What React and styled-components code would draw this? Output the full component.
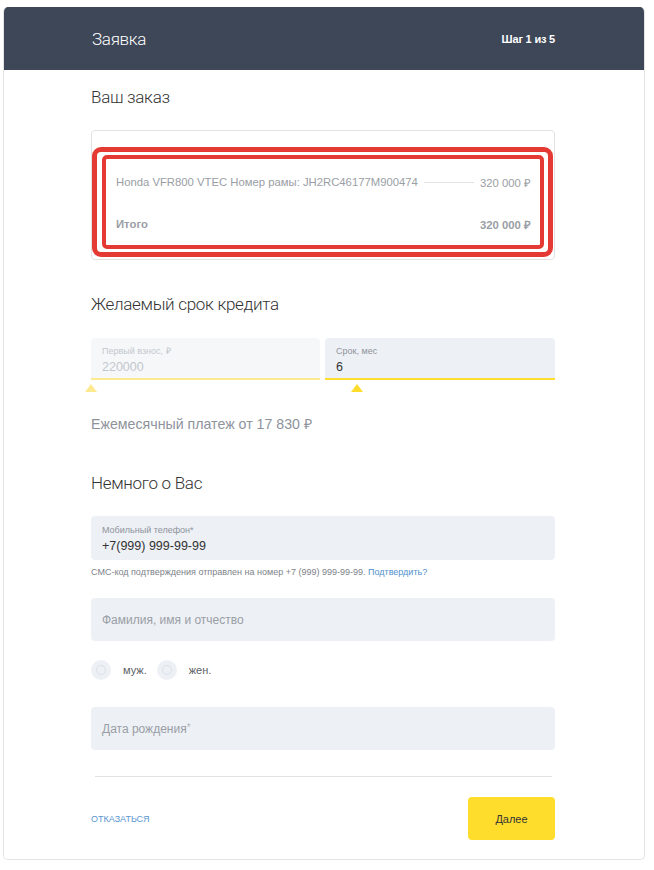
import React from "react";
import styled, { createGlobalStyle } from "styled-components";

const GlobalStyle = createGlobalStyle`
  html, body {
    margin: 0;
    padding: 0;
    background: #ffffff;
  }
  body {
    font-family: "Liberation Sans", Arial, sans-serif;
    color: #333333;
  }
`;

const Card = styled.div`
  box-sizing: border-box;
  width: 642px;
  margin: 7px 0 0 3px;
  border: 1px solid #e4e4e4;
  border-top: none;
  border-radius: 5px;
  overflow: hidden;
  padding-bottom: 19px;
`;

const Header = styled.header`
  height: 63px;
  background: #3e4757;
  display: flex;
  align-items: center;
  justify-content: space-between;
  padding: 0 89px 0 88px;
  color: #ffffff;
  h1 {
    margin: 0;
    font-family: Roboto, sans-serif;
    font-weight: 300;
    font-size: 17px;
    letter-spacing: -0.3px;
  }
  span {
    font-size: 11px;
    font-weight: 700;
    letter-spacing: -0.2px;
  }
`;

const Body = styled.div`
  padding: 0 89px 0 87px;
`;

const SectionTitle = styled.h2`
  margin: ${(p) => p.$top}px 0 0;
  font-family: Roboto, sans-serif;
  font-weight: 300;
  font-size: 17px;
  letter-spacing: -0.3px;
  line-height: 24px;
  color: #333333;
`;

const OrderBox = styled.div`
  box-sizing: border-box;
  margin-top: 21px;
  height: 130px;
  border: 1px solid #e2e2e2;
  border-radius: 4px;
  padding: 16px 1px 0 0;
`;

const Highlight = styled.div`
  box-sizing: border-box;
  height: 110px;
  border: 5px solid #e53a33;
  border-radius: 9px;
  padding: 3px 4px 3px 5px;
`;

const HighlightInner = styled.div`
  box-sizing: border-box;
  height: 100%;
  border: 4px solid #e53a33;
  border-radius: 5px;
  padding: 16px 9px 0 10px;
`;

const OrderRow = styled.div`
  display: flex;
  align-items: center;
  height: 14px;
  font-size: 11.3px;
  color: #9a9ea5;
  font-weight: ${(p) => (p.$bold ? 700 : 400)};
  margin-top: ${(p) => p.$top || 0}px;
`;

const Leader = styled.div`
  flex: 1;
  height: 1px;
  background: #e1e3e6;
  margin: 0 6px;
`;

const Spacer = styled.div`
  flex: 1;
`;

const InputRow = styled.div`
  margin-top: 22px;
  display: grid;
  grid-template-columns: 229px 230px;
  gap: 5px;
`;

const SliderField = styled.div`
  position: relative;
  box-sizing: border-box;
  height: 42px;
  background: ${(p) => (p.$disabled ? "#f6f7f9" : "#edf0f5")};
  border-bottom: 2px solid ${(p) => (p.$disabled ? "#fde98f" : "#ffdd2d")};
  border-radius: 4px 4px 0 0;
  padding: 8px 11px 0;
`;

const Thumb = styled.div`
  position: absolute;
  top: 46px;
  width: 0;
  height: 0;
  margin-left: -6px;
  border-left: 6px solid transparent;
  border-right: 6px solid transparent;
  border-bottom: 8px solid ${(p) => (p.$disabled ? "#fde98f" : "#ffdd2d")};
`;

const SmallLabel = styled.div`
  font-size: 9px;
  line-height: 11px;
  color: ${(p) => (p.$disabled ? "#c3c7cd" : "#8e939b")};
`;

const Value = styled.div`
  margin-top: 3px;
  font-size: 12.5px;
  line-height: 15px;
  color: ${(p) => (p.$disabled ? "#c3c7cd" : "#333333")};
`;

const Monthly = styled.div`
  margin-top: 35px;
  font-size: 14.2px;
  line-height: 18px;
  color: #8e939b;
`;

const Field = styled.div`
  box-sizing: border-box;
  margin-top: ${(p) => p.$top}px;
  height: ${(p) => p.$height}px;
  background: #edf0f5;
  border-radius: 4px;
  padding: ${(p) => (p.$filled ? "9px 11px 0" : "0 11px")};
  display: flex;
  flex-direction: column;
  justify-content: ${(p) => (p.$filled ? "flex-start" : "center")};
`;

const Placeholder = styled.div`
  font-size: 12px;
  color: #9a9ea5;
  sup {
    font-size: 10px;
    color: #b5b9bf;
    vertical-align: top;
    position: relative;
    top: 0;
  }
`;

const Hint = styled.div`
  margin-top: 6px;
  font-size: 9px;
  line-height: 12px;
  color: #7d8289;
  a {
    color: #4f8fcc;
    text-decoration: none;
  }
`;

const RadioGroup = styled.div`
  margin-top: 19px;
  display: flex;
  align-items: center;
  height: 20px;
`;

const RadioOption = styled.label`
  display: flex;
  align-items: center;
  gap: 12px;
  margin-right: 10px;
  font-size: 11px;
  color: #5c6168;
`;

const RadioCircle = styled.span`
  width: 20px;
  height: 20px;
  border-radius: 50%;
  background: #edf0f5;
  display: flex;
  align-items: center;
  justify-content: center;
  &::after {
    content: "";
    width: 8px;
    height: 8px;
    border-radius: 50%;
    border: 1px solid #dde1e8;
  }
`;

const Divider = styled.hr`
  margin: 26px 3px 0 4px;
  border: none;
  border-top: 1px solid #e2e2e2;
`;

const Footer = styled.div`
  margin-top: 20px;
  display: flex;
  align-items: center;
  justify-content: space-between;
`;

const CancelLink = styled.a`
  font-size: 9px;
  text-transform: uppercase;
  color: #5a96cf;
  text-decoration: none;
`;

const NextButton = styled.button`
  width: 87px;
  height: 43px;
  border: none;
  border-radius: 4px;
  background: #ffdd2d;
  font-family: "Liberation Sans", Arial, sans-serif;
  font-size: 11px;
  color: #333333;
`;

export default function App() {
  return (
    <>
      <GlobalStyle />
      <Card>
        <Header>
          <h1>Заявка</h1>
          <span>Шаг 1 из 5</span>
        </Header>
        <Body>
          <SectionTitle $top={15}>Ваш заказ</SectionTitle>
          <OrderBox>
            <Highlight>
              <HighlightInner>
                <OrderRow>
                  <span>Honda VFR800 VTEC Номер рамы: JH2RC46177M900474</span>
                  <Leader />
                  <span>320 000 ₽</span>
                </OrderRow>
                <OrderRow $bold $top={28}>
                  <span>Итого</span>
                  <Spacer />
                  <span>320 000 ₽</span>
                </OrderRow>
              </HighlightInner>
            </Highlight>
          </OrderBox>

          <SectionTitle $top={32}>Желаемый срок кредита</SectionTitle>
          <InputRow>
            <SliderField $disabled>
              <SmallLabel $disabled>Первый взнос, ₽</SmallLabel>
              <Value $disabled>220000</Value>
              <Thumb $disabled style={{ left: "0%" }} />
            </SliderField>
            <SliderField>
              <SmallLabel>Срок, мес</SmallLabel>
              <Value>6</Value>
              <Thumb style={{ left: "14%" }} />
            </SliderField>
          </InputRow>
          <Monthly>Ежемесячный платеж от 17 830 ₽</Monthly>

          <SectionTitle $top={38}>Немного о Вас</SectionTitle>
          <Field $top={21} $height={44} $filled>
            <SmallLabel>Мобильный телефон*</SmallLabel>
            <Value>+7(999) 999-99-99</Value>
          </Field>
          <Hint>
            СМС-код подтверждения отправлен на номер +7 (999) 999-99-99.{" "}
            <a href="#">Подтвердить?</a>
          </Hint>
          <Field $top={20} $height={43}>
            <Placeholder>Фамилия, имя и отчество</Placeholder>
          </Field>
          <RadioGroup>
            <RadioOption>
              <RadioCircle />
              муж.
            </RadioOption>
            <RadioOption>
              <RadioCircle />
              жен.
            </RadioOption>
          </RadioGroup>
          <Field $top={27} $height={43}>
            <Placeholder>
              Дата рождения<sup>*</sup>
            </Placeholder>
          </Field>
          <Divider />
          <Footer>
            <CancelLink href="#">Отказаться</CancelLink>
            <NextButton>Далее</NextButton>
          </Footer>
        </Body>
      </Card>
    </>
  );
}
